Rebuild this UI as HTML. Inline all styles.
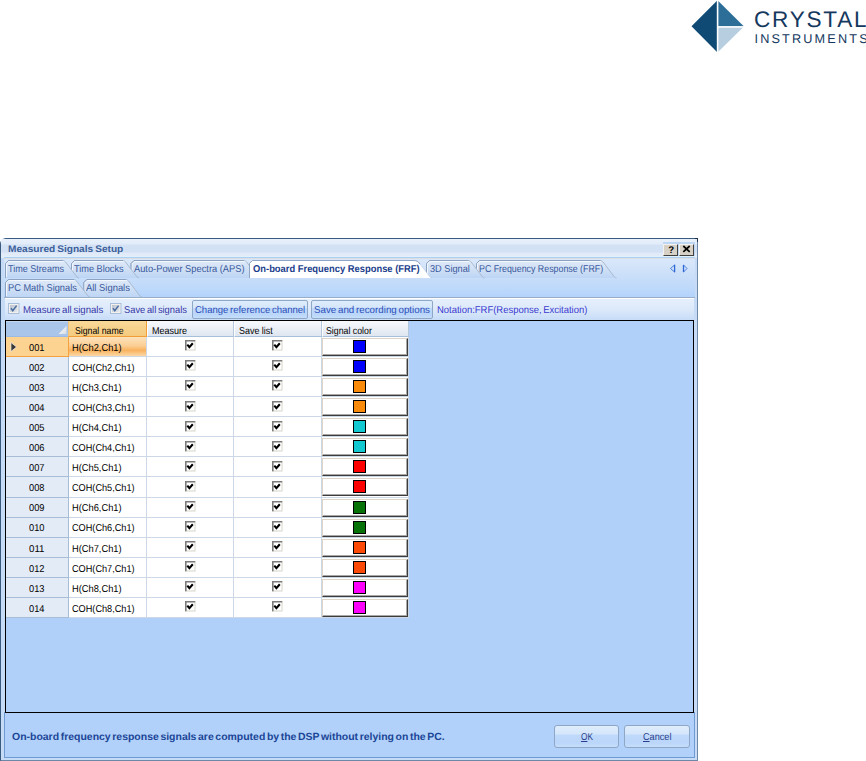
<!DOCTYPE html><html><head><meta charset="utf-8"><style>
html,body{margin:0;padding:0}
body{width:866px;height:761px;position:relative;overflow:hidden;background:#fff;font-family:"Liberation Sans",sans-serif;text-rendering:geometricPrecision}
.a{position:absolute}
.t{position:absolute;white-space:nowrap}
</style></head><body>
<svg class="a" style="left:685px;top:0px" width="181" height="56" viewBox="0 0 181 56">
<polygon points="6.5,26.3 32.5,0.3 32.5,52.5" fill="#0f4a74"/>
<polygon points="32.5,0.3 59,26.6 32.5,26.6" fill="#2c6e98"/>
<polygon points="32.5,26.6 59,26.6 32.5,52.5" fill="#b6cee0"/>
<rect x="31.8" y="0" width="1.6" height="53" fill="#fff"/>
<rect x="32.5" y="26.2" width="27" height="1.5" fill="#fff"/>
</svg>
<div class="t" style="left:754.00px;top:8.07px;font-size:22.6px;line-height:24px;font-weight:400;color:#14385e;word-spacing:0px;letter-spacing:1.75px;">CRYSTAL</div>
<div class="t" style="left:754.50px;top:31.60px;font-size:12.7px;line-height:14px;font-weight:400;color:#14385e;word-spacing:0px;letter-spacing:2.15px;">INSTRUMENTS</div>
<div class="a" style="left:0;top:238px;width:696px;height:521px;border:1px solid #6d87a9;border-top-color:#3a5a80;border-left-color:#3a5a80;background:#c6dcf6;border-top-left-radius:6px"></div>
<div class="a" style="left:695px;top:238px;width:3px;height:1px;background:#1c2c44"></div><div class="a" style="left:697px;top:238px;width:1px;height:4px;background:#24344c"></div><div class="a" style="left:696px;top:239px;width:1px;height:1px;background:#5a6a80"></div>
<div class="a" style="left:1px;top:239px;width:696px;height:19px;background:linear-gradient(#e8f0fb 0px,#e2ecf9 5px,#d3e1f5 6px,#d3e1f5 13px,#e0eaf8 14px,#e3edf9 18px)"></div>
<div class="t" style="left:7.80px;top:243.97px;font-size:9.6px;line-height:11px;font-weight:700;color:#3b5f99;word-spacing:-0.8px;transform:scale(1.0546,1.0);transform-origin:0 8.83px;">Measured Signals Setup</div>
<div class="a" style="left:663px;top:242px;width:32px;height:14px;background:#bcd6f3"></div>
<div class="a" style="left:663px;top:244px;width:13px;height:10px;background:#d6d0c6;border-right:1px solid #404040;border-bottom:1px solid #404040;border-top:1px solid #f4f2ee;border-left:1px solid #f4f2ee"></div>
<div class="a" style="left:679px;top:244px;width:13px;height:10px;background:#d6d0c6;border-right:1px solid #404040;border-bottom:1px solid #404040;border-top:1px solid #f4f2ee;border-left:1px solid #f4f2ee"></div>
<div class="t" style="left:668.20px;top:245.17px;font-size:9.6px;line-height:11px;font-weight:700;color:#000;word-spacing:0px;">?</div>
<svg class="a" style="left:682px;top:245px" width="9" height="8" viewBox="0 0 9 8"><path d="M1.3 1 L7.7 6.8 M7.7 1 L1.3 6.8" stroke="#000" stroke-width="1.7"/></svg>
<div class="a" style="left:4px;top:256px;width:691px;height:1px;background:#e2f0fb"></div>
<div class="a" style="left:4px;top:257px;width:691px;height:1px;background:#acd0f4"></div>
<div class="a" style="left:4px;top:258px;width:691px;height:40px;background:linear-gradient(#dbe8fa,#c8def9 50%,#b3d3fc)"></div>
<div class="a" style="left:4px;top:258px;width:691px;height:1px;background:#dcdee2"></div>
<div class="a" style="left:4px;top:297px;width:691px;height:1px;background:#97adc8"></div>
<svg class="a" style="left:0;top:0" width="866" height="320" viewBox="0 0 866 320"><defs><linearGradient id="tg" x1="0" y1="0" x2="0" y2="1"><stop offset="0" stop-color="#e0eaf8"/><stop offset="0.5" stop-color="#d0e0f5"/><stop offset="1" stop-color="#bdd5f5"/></linearGradient><linearGradient id="ta" x1="0" y1="0" x2="0" y2="1"><stop offset="0" stop-color="#ffffff"/><stop offset="1" stop-color="#ffffff"/></linearGradient></defs><path d="M476.5,278 L476.5,263.5 L479.5,260.5 L600.5,260.5 C601.5,260.5 602.0,261 603.0,262 L614.5,277 C615.0,277.5 615.5,278 616.5,278" fill="url(#tg)" stroke="#a9bbd1" stroke-width="1"/><path d="M477.5,277 L477.5,264 L480,261.5 L601.0,261.5" fill="none" stroke="#f2f7fd" stroke-width="1"/><path d="M476.5,278 L476.5,263.5 L479.5,260.5 L600.5,260.5" fill="none" stroke="#8ba2c0" stroke-width="1"/><path d="M426.5,278 L426.5,263.5 L429.5,260.5 L468.6,260.5 C469.6,260.5 470.1,261 471.1,262 L482.6,277 C483.1,277.5 483.6,278 484.6,278" fill="url(#tg)" stroke="#a9bbd1" stroke-width="1"/><path d="M427.5,277 L427.5,264 L430,261.5 L469.1,261.5" fill="none" stroke="#f2f7fd" stroke-width="1"/><path d="M426.5,278 L426.5,263.5 L429.5,260.5 L468.6,260.5" fill="none" stroke="#8ba2c0" stroke-width="1"/><path d="M131.0,278 L131.0,263.5 L134.0,260.5 L244,260.5 C245,260.5 245.5,261 246.5,262 L258,277 C258.5,277.5 259,278 260,278" fill="url(#tg)" stroke="#a9bbd1" stroke-width="1"/><path d="M132.0,277 L132.0,264 L134.5,261.5 L244.5,261.5" fill="none" stroke="#f2f7fd" stroke-width="1"/><path d="M131.0,278 L131.0,263.5 L134.0,260.5 L244,260.5" fill="none" stroke="#8ba2c0" stroke-width="1"/><path d="M71.5,278 L71.5,263.5 L74.5,260.5 L123,260.5 C124,260.5 124.5,261 125.5,262 L137,277 C137.5,277.5 138,278 139,278" fill="url(#tg)" stroke="#a9bbd1" stroke-width="1"/><path d="M72.5,277 L72.5,264 L75,261.5 L123.5,261.5" fill="none" stroke="#f2f7fd" stroke-width="1"/><path d="M71.5,278 L71.5,263.5 L74.5,260.5 L123,260.5" fill="none" stroke="#8ba2c0" stroke-width="1"/><path d="M5.5,278 L5.5,263.5 L8.5,260.5 L63,260.5 C64,260.5 64.5,261 65.5,262 L77,277 C77.5,277.5 78,278 79,278" fill="url(#tg)" stroke="#a9bbd1" stroke-width="1"/><path d="M6.5,277 L6.5,264 L9,261.5 L63.5,261.5" fill="none" stroke="#f2f7fd" stroke-width="1"/><path d="M5.5,278 L5.5,263.5 L8.5,260.5 L63,260.5" fill="none" stroke="#8ba2c0" stroke-width="1"/><path d="M83.8,297 L83.8,282.5 L86.8,279.5 L126,279.5 C127,279.5 127.5,280 128.5,281 L140,296 C140.5,296.5 141,297 142,297" fill="url(#tg)" stroke="#a9bbd1" stroke-width="1"/><path d="M84.8,296 L84.8,283 L87.3,280.5 L126.5,280.5" fill="none" stroke="#f2f7fd" stroke-width="1"/><path d="M83.8,297 L83.8,282.5 L86.8,279.5 L126,279.5" fill="none" stroke="#8ba2c0" stroke-width="1"/><path d="M5.5,297 L5.5,282.5 L8.5,279.5 L74,279.5 C75,279.5 75.5,280 76.5,281 L88,296 C88.5,296.5 89,297 90,297" fill="url(#tg)" stroke="#a9bbd1" stroke-width="1"/><path d="M6.5,296 L6.5,283 L9,280.5 L74.5,280.5" fill="none" stroke="#f2f7fd" stroke-width="1"/><path d="M5.5,297 L5.5,282.5 L8.5,279.5 L74,279.5" fill="none" stroke="#8ba2c0" stroke-width="1"/><path d="M249.5,278 L249.5,263.5 L252.5,260.5 L416,260.5 C417,260.5 417.5,261 418.5,262 L430,277 C430.5,277.5 431,278 432,278" fill="#ffffff" stroke="#b9cbe2" stroke-width="0.6"/><path d="M249.5,278 L249.5,263.5 L252.5,260.5 L413,260.5 C417,260.5 418,261.5 420,264" fill="none" stroke="#8ea5c3" stroke-width="1"/></svg>
<div class="t" style="left:7.80px;top:263.94px;font-size:10.0px;line-height:11px;font-weight:400;color:#38589c;word-spacing:0px;transform:scale(0.9053,1.0);transform-origin:0 8.96px;">Time Streams</div>
<div class="t" style="left:74.30px;top:263.94px;font-size:10.0px;line-height:11px;font-weight:400;color:#38589c;word-spacing:0px;transform:scale(0.9171,1.0);transform-origin:0 8.96px;">Time Blocks</div>
<div class="t" style="left:133.50px;top:263.94px;font-size:10.0px;line-height:11px;font-weight:400;color:#38589c;word-spacing:0px;transform:scale(0.9291,1.0);transform-origin:0 8.96px;">Auto-Power Spectra (APS)</div>
<div class="t" style="left:429.50px;top:263.94px;font-size:10.0px;line-height:11px;font-weight:400;color:#38589c;word-spacing:0px;transform:scale(0.9180,1.0);transform-origin:0 8.96px;">3D Signal</div>
<div class="t" style="left:479.00px;top:263.94px;font-size:10.0px;line-height:11px;font-weight:400;color:#38589c;word-spacing:0px;transform:scale(0.8826,1.0);transform-origin:0 8.96px;">PC Frequency Response (FRF)</div>
<div class="t" style="left:7.80px;top:282.74px;font-size:10.0px;line-height:11px;font-weight:400;color:#38589c;word-spacing:0px;transform:scale(0.9238,1.0);transform-origin:0 8.96px;">PC Math Signals</div>
<div class="t" style="left:85.60px;top:282.74px;font-size:10.0px;line-height:11px;font-weight:400;color:#38589c;word-spacing:0px;transform:scale(0.9403,1.0);transform-origin:0 8.96px;">All Signals</div>
<div class="t" style="left:252.70px;top:263.94px;font-size:10.0px;line-height:11px;font-weight:700;color:#1b3e8c;word-spacing:0px;transform:scale(0.9371,1.0);transform-origin:0 8.96px;">On-board Frequency Response (FRF)</div>
<svg class="a" style="left:662px;top:258px" width="32" height="20" viewBox="0 0 32 20"><path d="M12.5,7 L8.5,10.5 L12.5,14" fill="none" stroke="#3a70d8" stroke-width="0.9"/><path d="M12.6,6.8 L12.6,14.2" stroke="#2f68d8" stroke-width="1.3"/><path d="M21.5,7 L25,10.5 L21.5,14" fill="none" stroke="#3a70d8" stroke-width="0.9"/><path d="M21.5,6.8 L21.5,14.2" stroke="#2f68d8" stroke-width="1.3"/></svg>
<div class="a" style="left:4px;top:712px;width:689px;height:45px;border:1px solid #6f9bd2;border-top:none;background:#b1d1fa"></div>
<div class="a" style="left:5px;top:298px;width:689px;height:22px;background:linear-gradient(#e6f0fc,#dce9fa 50%,#c7dcf8);border-top:1px solid #ffffff;box-sizing:border-box"></div>
<div class="a" style="left:5px;top:320px;width:687px;height:391px;border:1px solid #000;background:#b0d0fa"></div>
<div class="a" style="left:6px;top:321px;width:62px;height:15px;background:#a9c5e9;border-top:1px solid #c3d7f0;box-sizing:border-box"></div>
<div class="a" style="left:6px;top:336px;width:63px;height:1px;background:#9dbbe2"></div>
<svg class="a" style="left:57px;top:325px" width="11" height="10" viewBox="0 0 11 10"><defs><linearGradient id="cg" x1="0" y1="0" x2="1" y2="1"><stop offset="0" stop-color="#ffffff"/><stop offset="1" stop-color="#d8dde4"/></linearGradient></defs><path d="M1.5,9 L9.5,1 L9.5,9 Z" fill="url(#cg)"/></svg>
<div class="a" style="left:68px;top:321px;width:79px;height:16px;background:linear-gradient(#f9d899,#f5cb7e);border-left:1px solid #f3c27a;border-right:1px solid #f29d38;border-bottom:1px solid #f29d38;box-sizing:border-box"></div>
<div class="a" style="left:147px;top:321px;width:87px;height:16px;background:linear-gradient(#f7f9fc,#e9eef5 60%,#dfe6f0);border-left:1px solid #ffffff;border-right:1px solid #b5c7dc;border-bottom:1px solid #a8bfd9;box-sizing:border-box"></div>
<div class="a" style="left:234px;top:321px;width:88px;height:16px;background:linear-gradient(#f7f9fc,#e9eef5 60%,#dfe6f0);border-left:1px solid #ffffff;border-right:1px solid #b5c7dc;border-bottom:1px solid #a8bfd9;box-sizing:border-box"></div>
<div class="a" style="left:322px;top:321px;width:87px;height:16px;background:linear-gradient(#f7f9fc,#e9eef5 60%,#dfe6f0);border-left:1px solid #ffffff;border-right:1px solid #b5c7dc;border-bottom:1px solid #a8bfd9;box-sizing:border-box"></div>
<div class="t" style="left:74.80px;top:326.24px;font-size:10.0px;line-height:11px;font-weight:400;color:#000;word-spacing:0px;transform:scale(0.8728,1.0);transform-origin:0 8.96px;">Signal name</div>
<div class="t" style="left:151.50px;top:326.24px;font-size:10.0px;line-height:11px;font-weight:400;color:#000;word-spacing:0px;transform:scale(0.9023,1.0);transform-origin:0 8.96px;">Measure</div>
<div class="t" style="left:238.80px;top:326.24px;font-size:10.0px;line-height:11px;font-weight:400;color:#000;word-spacing:0px;transform:scale(0.8944,1.0);transform-origin:0 8.96px;">Save list</div>
<div class="t" style="left:326.40px;top:326.24px;font-size:10.0px;line-height:11px;font-weight:400;color:#000;word-spacing:0px;transform:scale(0.8768,1.0);transform-origin:0 8.96px;">Signal color</div>
<div class="a" style="left:6px;top:337px;width:62px;height:19px;background:#fdd391"></div>
<div class="a" style="left:6px;top:356px;width:63px;height:1px;background:#f4a13e"></div>
<svg class="a" style="left:10px;top:342px" width="8" height="11" viewBox="0 0 8 11"><path d="M1,0.5 L6.5,5 L1,9.5 Z" fill="#3a3a3a" stroke="#ffffff" stroke-width="0.6"/></svg>
<div class="a" style="left:69px;top:337px;width:77px;height:19px;background:linear-gradient(#fde2bb,#fbcf95 45%,#f8b25e 70%,#fbd9a7)"></div>
<div class="a" style="left:68px;top:337px;width:1px;height:19px;background:#f4a13e"></div>
<div class="a" style="left:147px;top:337px;width:261px;height:19px;background:#fff"></div>
<div class="a" style="left:146px;top:337px;width:1px;height:19px;background:#cdd8e6"></div>
<div class="a" style="left:233px;top:337px;width:1px;height:19px;background:#cdd8e6"></div>
<div class="a" style="left:321px;top:337px;width:1px;height:19px;background:#cdd8e6"></div>
<div class="a" style="left:69px;top:356px;width:339px;height:1px;background:#cdd8e6"></div>
<div class="a" style="left:408px;top:337px;width:1px;height:20px;background:#cdd8e6"></div>
<div class="t" style="left:28.70px;top:342.84px;font-size:10.0px;line-height:11px;font-weight:400;color:#000;word-spacing:0px;transform:scale(0.9286,1.0);transform-origin:0 8.96px;">001</div>
<div class="t" style="left:71.70px;top:342.84px;font-size:10.0px;line-height:11px;font-weight:400;color:#000;word-spacing:0px;transform:scale(0.9298,1.0);transform-origin:0 8.96px;">H(Ch2,Ch1)</div>
<svg class="a" style="left:185px;top:340px" width="11" height="11" viewBox="0 0 11 11"><rect x="0.5" y="0.5" width="9.5" height="9.5" fill="#fff" stroke="#d8d4c8"/><path d="M0.8,10.2 L0.8,0.8 L10.2,0.8" fill="none" stroke="#7a7a7a" stroke-width="1.6"/><path d="M2.3,4.6 L4.4,7.2 L7.8,3.3" fill="none" stroke="#000" stroke-width="2.1"/></svg>
<svg class="a" style="left:272px;top:340px" width="11" height="11" viewBox="0 0 11 11"><rect x="0.5" y="0.5" width="9.5" height="9.5" fill="#fff" stroke="#d8d4c8"/><path d="M0.8,10.2 L0.8,0.8 L10.2,0.8" fill="none" stroke="#7a7a7a" stroke-width="1.6"/><path d="M2.3,4.6 L4.4,7.2 L7.8,3.3" fill="none" stroke="#000" stroke-width="2.1"/></svg>
<div class="a" style="left:322px;top:338px;width:86px;height:18px;background:#fff;border-top:1px solid #ddd5c6;border-left:1px solid #ddd5c6;border-right:1px solid #3c3c3c;border-bottom:1px solid #3c3c3c;box-shadow:inset -1px -1px 0 #a8a8a8;box-sizing:border-box"></div>
<div class="a" style="left:353px;top:339.5px;width:11px;height:11px;background:#0000ff;border:1px solid #000"></div>
<div class="a" style="left:6px;top:357px;width:62px;height:19px;background:#e3ebf6"></div>
<div class="a" style="left:6px;top:376px;width:63px;height:1px;background:#a7bdd6"></div>
<div class="a" style="left:69px;top:357px;width:77px;height:19px;background:#fff"></div>
<div class="a" style="left:68px;top:357px;width:1px;height:19px;background:#a7bdd6"></div>
<div class="a" style="left:147px;top:357px;width:261px;height:19px;background:#fff"></div>
<div class="a" style="left:146px;top:357px;width:1px;height:19px;background:#cdd8e6"></div>
<div class="a" style="left:233px;top:357px;width:1px;height:19px;background:#cdd8e6"></div>
<div class="a" style="left:321px;top:357px;width:1px;height:19px;background:#cdd8e6"></div>
<div class="a" style="left:69px;top:376px;width:339px;height:1px;background:#cdd8e6"></div>
<div class="a" style="left:408px;top:357px;width:1px;height:20px;background:#cdd8e6"></div>
<div class="t" style="left:28.70px;top:362.91px;font-size:10.0px;line-height:11px;font-weight:400;color:#000;word-spacing:0px;transform:scale(0.9286,1.0);transform-origin:0 8.96px;">002</div>
<div class="t" style="left:71.70px;top:362.91px;font-size:10.0px;line-height:11px;font-weight:400;color:#000;word-spacing:0px;transform:scale(0.9159,1.0);transform-origin:0 8.96px;">COH(Ch2,Ch1)</div>
<svg class="a" style="left:185px;top:360px" width="11" height="11" viewBox="0 0 11 11"><rect x="0.5" y="0.5" width="9.5" height="9.5" fill="#fff" stroke="#d8d4c8"/><path d="M0.8,10.2 L0.8,0.8 L10.2,0.8" fill="none" stroke="#7a7a7a" stroke-width="1.6"/><path d="M2.3,4.6 L4.4,7.2 L7.8,3.3" fill="none" stroke="#000" stroke-width="2.1"/></svg>
<svg class="a" style="left:272px;top:360px" width="11" height="11" viewBox="0 0 11 11"><rect x="0.5" y="0.5" width="9.5" height="9.5" fill="#fff" stroke="#d8d4c8"/><path d="M0.8,10.2 L0.8,0.8 L10.2,0.8" fill="none" stroke="#7a7a7a" stroke-width="1.6"/><path d="M2.3,4.6 L4.4,7.2 L7.8,3.3" fill="none" stroke="#000" stroke-width="2.1"/></svg>
<div class="a" style="left:322px;top:358px;width:86px;height:18px;background:#fff;border-top:1px solid #ddd5c6;border-left:1px solid #ddd5c6;border-right:1px solid #3c3c3c;border-bottom:1px solid #3c3c3c;box-shadow:inset -1px -1px 0 #a8a8a8;box-sizing:border-box"></div>
<div class="a" style="left:353px;top:359.5px;width:11px;height:11px;background:#0000ff;border:1px solid #000"></div>
<div class="a" style="left:6px;top:377px;width:62px;height:19px;background:#e3ebf6"></div>
<div class="a" style="left:6px;top:396px;width:63px;height:1px;background:#a7bdd6"></div>
<div class="a" style="left:69px;top:377px;width:77px;height:19px;background:#fff"></div>
<div class="a" style="left:68px;top:377px;width:1px;height:19px;background:#a7bdd6"></div>
<div class="a" style="left:147px;top:377px;width:261px;height:19px;background:#fff"></div>
<div class="a" style="left:146px;top:377px;width:1px;height:19px;background:#cdd8e6"></div>
<div class="a" style="left:233px;top:377px;width:1px;height:19px;background:#cdd8e6"></div>
<div class="a" style="left:321px;top:377px;width:1px;height:19px;background:#cdd8e6"></div>
<div class="a" style="left:69px;top:396px;width:339px;height:1px;background:#cdd8e6"></div>
<div class="a" style="left:408px;top:377px;width:1px;height:20px;background:#cdd8e6"></div>
<div class="t" style="left:28.70px;top:382.98px;font-size:10.0px;line-height:11px;font-weight:400;color:#000;word-spacing:0px;transform:scale(0.9286,1.0);transform-origin:0 8.96px;">003</div>
<div class="t" style="left:71.70px;top:382.98px;font-size:10.0px;line-height:11px;font-weight:400;color:#000;word-spacing:0px;transform:scale(0.9298,1.0);transform-origin:0 8.96px;">H(Ch3,Ch1)</div>
<svg class="a" style="left:185px;top:380px" width="11" height="11" viewBox="0 0 11 11"><rect x="0.5" y="0.5" width="9.5" height="9.5" fill="#fff" stroke="#d8d4c8"/><path d="M0.8,10.2 L0.8,0.8 L10.2,0.8" fill="none" stroke="#7a7a7a" stroke-width="1.6"/><path d="M2.3,4.6 L4.4,7.2 L7.8,3.3" fill="none" stroke="#000" stroke-width="2.1"/></svg>
<svg class="a" style="left:272px;top:380px" width="11" height="11" viewBox="0 0 11 11"><rect x="0.5" y="0.5" width="9.5" height="9.5" fill="#fff" stroke="#d8d4c8"/><path d="M0.8,10.2 L0.8,0.8 L10.2,0.8" fill="none" stroke="#7a7a7a" stroke-width="1.6"/><path d="M2.3,4.6 L4.4,7.2 L7.8,3.3" fill="none" stroke="#000" stroke-width="2.1"/></svg>
<div class="a" style="left:322px;top:378px;width:86px;height:18px;background:#fff;border-top:1px solid #ddd5c6;border-left:1px solid #ddd5c6;border-right:1px solid #3c3c3c;border-bottom:1px solid #3c3c3c;box-shadow:inset -1px -1px 0 #a8a8a8;box-sizing:border-box"></div>
<div class="a" style="left:353px;top:379.5px;width:11px;height:11px;background:#fa8a0a;border:1px solid #000"></div>
<div class="a" style="left:6px;top:397px;width:62px;height:19px;background:#e3ebf6"></div>
<div class="a" style="left:6px;top:416px;width:63px;height:1px;background:#a7bdd6"></div>
<div class="a" style="left:69px;top:397px;width:77px;height:19px;background:#fff"></div>
<div class="a" style="left:68px;top:397px;width:1px;height:19px;background:#a7bdd6"></div>
<div class="a" style="left:147px;top:397px;width:261px;height:19px;background:#fff"></div>
<div class="a" style="left:146px;top:397px;width:1px;height:19px;background:#cdd8e6"></div>
<div class="a" style="left:233px;top:397px;width:1px;height:19px;background:#cdd8e6"></div>
<div class="a" style="left:321px;top:397px;width:1px;height:19px;background:#cdd8e6"></div>
<div class="a" style="left:69px;top:416px;width:339px;height:1px;background:#cdd8e6"></div>
<div class="a" style="left:408px;top:397px;width:1px;height:20px;background:#cdd8e6"></div>
<div class="t" style="left:28.70px;top:403.05px;font-size:10.0px;line-height:11px;font-weight:400;color:#000;word-spacing:0px;transform:scale(0.9286,1.0);transform-origin:0 8.96px;">004</div>
<div class="t" style="left:71.70px;top:403.05px;font-size:10.0px;line-height:11px;font-weight:400;color:#000;word-spacing:0px;transform:scale(0.9159,1.0);transform-origin:0 8.96px;">COH(Ch3,Ch1)</div>
<svg class="a" style="left:185px;top:401px" width="11" height="11" viewBox="0 0 11 11"><rect x="0.5" y="0.5" width="9.5" height="9.5" fill="#fff" stroke="#d8d4c8"/><path d="M0.8,10.2 L0.8,0.8 L10.2,0.8" fill="none" stroke="#7a7a7a" stroke-width="1.6"/><path d="M2.3,4.6 L4.4,7.2 L7.8,3.3" fill="none" stroke="#000" stroke-width="2.1"/></svg>
<svg class="a" style="left:272px;top:401px" width="11" height="11" viewBox="0 0 11 11"><rect x="0.5" y="0.5" width="9.5" height="9.5" fill="#fff" stroke="#d8d4c8"/><path d="M0.8,10.2 L0.8,0.8 L10.2,0.8" fill="none" stroke="#7a7a7a" stroke-width="1.6"/><path d="M2.3,4.6 L4.4,7.2 L7.8,3.3" fill="none" stroke="#000" stroke-width="2.1"/></svg>
<div class="a" style="left:322px;top:398px;width:86px;height:18px;background:#fff;border-top:1px solid #ddd5c6;border-left:1px solid #ddd5c6;border-right:1px solid #3c3c3c;border-bottom:1px solid #3c3c3c;box-shadow:inset -1px -1px 0 #a8a8a8;box-sizing:border-box"></div>
<div class="a" style="left:353px;top:399.5px;width:11px;height:11px;background:#fa8a0a;border:1px solid #000"></div>
<div class="a" style="left:6px;top:417px;width:62px;height:19px;background:#e3ebf6"></div>
<div class="a" style="left:6px;top:436px;width:63px;height:1px;background:#a7bdd6"></div>
<div class="a" style="left:69px;top:417px;width:77px;height:19px;background:#fff"></div>
<div class="a" style="left:68px;top:417px;width:1px;height:19px;background:#a7bdd6"></div>
<div class="a" style="left:147px;top:417px;width:261px;height:19px;background:#fff"></div>
<div class="a" style="left:146px;top:417px;width:1px;height:19px;background:#cdd8e6"></div>
<div class="a" style="left:233px;top:417px;width:1px;height:19px;background:#cdd8e6"></div>
<div class="a" style="left:321px;top:417px;width:1px;height:19px;background:#cdd8e6"></div>
<div class="a" style="left:69px;top:436px;width:339px;height:1px;background:#cdd8e6"></div>
<div class="a" style="left:408px;top:417px;width:1px;height:20px;background:#cdd8e6"></div>
<div class="t" style="left:28.70px;top:423.12px;font-size:10.0px;line-height:11px;font-weight:400;color:#000;word-spacing:0px;transform:scale(0.9286,1.0);transform-origin:0 8.96px;">005</div>
<div class="t" style="left:71.70px;top:423.12px;font-size:10.0px;line-height:11px;font-weight:400;color:#000;word-spacing:0px;transform:scale(0.9298,1.0);transform-origin:0 8.96px;">H(Ch4,Ch1)</div>
<svg class="a" style="left:185px;top:421px" width="11" height="11" viewBox="0 0 11 11"><rect x="0.5" y="0.5" width="9.5" height="9.5" fill="#fff" stroke="#d8d4c8"/><path d="M0.8,10.2 L0.8,0.8 L10.2,0.8" fill="none" stroke="#7a7a7a" stroke-width="1.6"/><path d="M2.3,4.6 L4.4,7.2 L7.8,3.3" fill="none" stroke="#000" stroke-width="2.1"/></svg>
<svg class="a" style="left:272px;top:421px" width="11" height="11" viewBox="0 0 11 11"><rect x="0.5" y="0.5" width="9.5" height="9.5" fill="#fff" stroke="#d8d4c8"/><path d="M0.8,10.2 L0.8,0.8 L10.2,0.8" fill="none" stroke="#7a7a7a" stroke-width="1.6"/><path d="M2.3,4.6 L4.4,7.2 L7.8,3.3" fill="none" stroke="#000" stroke-width="2.1"/></svg>
<div class="a" style="left:322px;top:418px;width:86px;height:18px;background:#fff;border-top:1px solid #ddd5c6;border-left:1px solid #ddd5c6;border-right:1px solid #3c3c3c;border-bottom:1px solid #3c3c3c;box-shadow:inset -1px -1px 0 #a8a8a8;box-sizing:border-box"></div>
<div class="a" style="left:353px;top:419.5px;width:11px;height:11px;background:#12c9d2;border:1px solid #000"></div>
<div class="a" style="left:6px;top:437px;width:62px;height:19px;background:#e3ebf6"></div>
<div class="a" style="left:6px;top:456px;width:63px;height:1px;background:#a7bdd6"></div>
<div class="a" style="left:69px;top:437px;width:77px;height:19px;background:#fff"></div>
<div class="a" style="left:68px;top:437px;width:1px;height:19px;background:#a7bdd6"></div>
<div class="a" style="left:147px;top:437px;width:261px;height:19px;background:#fff"></div>
<div class="a" style="left:146px;top:437px;width:1px;height:19px;background:#cdd8e6"></div>
<div class="a" style="left:233px;top:437px;width:1px;height:19px;background:#cdd8e6"></div>
<div class="a" style="left:321px;top:437px;width:1px;height:19px;background:#cdd8e6"></div>
<div class="a" style="left:69px;top:456px;width:339px;height:1px;background:#cdd8e6"></div>
<div class="a" style="left:408px;top:437px;width:1px;height:20px;background:#cdd8e6"></div>
<div class="t" style="left:28.70px;top:443.19px;font-size:10.0px;line-height:11px;font-weight:400;color:#000;word-spacing:0px;transform:scale(0.9286,1.0);transform-origin:0 8.96px;">006</div>
<div class="t" style="left:71.70px;top:443.19px;font-size:10.0px;line-height:11px;font-weight:400;color:#000;word-spacing:0px;transform:scale(0.9159,1.0);transform-origin:0 8.96px;">COH(Ch4,Ch1)</div>
<svg class="a" style="left:185px;top:441px" width="11" height="11" viewBox="0 0 11 11"><rect x="0.5" y="0.5" width="9.5" height="9.5" fill="#fff" stroke="#d8d4c8"/><path d="M0.8,10.2 L0.8,0.8 L10.2,0.8" fill="none" stroke="#7a7a7a" stroke-width="1.6"/><path d="M2.3,4.6 L4.4,7.2 L7.8,3.3" fill="none" stroke="#000" stroke-width="2.1"/></svg>
<svg class="a" style="left:272px;top:441px" width="11" height="11" viewBox="0 0 11 11"><rect x="0.5" y="0.5" width="9.5" height="9.5" fill="#fff" stroke="#d8d4c8"/><path d="M0.8,10.2 L0.8,0.8 L10.2,0.8" fill="none" stroke="#7a7a7a" stroke-width="1.6"/><path d="M2.3,4.6 L4.4,7.2 L7.8,3.3" fill="none" stroke="#000" stroke-width="2.1"/></svg>
<div class="a" style="left:322px;top:438px;width:86px;height:18px;background:#fff;border-top:1px solid #ddd5c6;border-left:1px solid #ddd5c6;border-right:1px solid #3c3c3c;border-bottom:1px solid #3c3c3c;box-shadow:inset -1px -1px 0 #a8a8a8;box-sizing:border-box"></div>
<div class="a" style="left:353px;top:439.5px;width:11px;height:11px;background:#12c9d2;border:1px solid #000"></div>
<div class="a" style="left:6px;top:457px;width:62px;height:19px;background:#e3ebf6"></div>
<div class="a" style="left:6px;top:476px;width:63px;height:1px;background:#a7bdd6"></div>
<div class="a" style="left:69px;top:457px;width:77px;height:19px;background:#fff"></div>
<div class="a" style="left:68px;top:457px;width:1px;height:19px;background:#a7bdd6"></div>
<div class="a" style="left:147px;top:457px;width:261px;height:19px;background:#fff"></div>
<div class="a" style="left:146px;top:457px;width:1px;height:19px;background:#cdd8e6"></div>
<div class="a" style="left:233px;top:457px;width:1px;height:19px;background:#cdd8e6"></div>
<div class="a" style="left:321px;top:457px;width:1px;height:19px;background:#cdd8e6"></div>
<div class="a" style="left:69px;top:476px;width:339px;height:1px;background:#cdd8e6"></div>
<div class="a" style="left:408px;top:457px;width:1px;height:20px;background:#cdd8e6"></div>
<div class="t" style="left:28.70px;top:463.26px;font-size:10.0px;line-height:11px;font-weight:400;color:#000;word-spacing:0px;transform:scale(0.9286,1.0);transform-origin:0 8.96px;">007</div>
<div class="t" style="left:71.70px;top:463.26px;font-size:10.0px;line-height:11px;font-weight:400;color:#000;word-spacing:0px;transform:scale(0.9298,1.0);transform-origin:0 8.96px;">H(Ch5,Ch1)</div>
<svg class="a" style="left:185px;top:461px" width="11" height="11" viewBox="0 0 11 11"><rect x="0.5" y="0.5" width="9.5" height="9.5" fill="#fff" stroke="#d8d4c8"/><path d="M0.8,10.2 L0.8,0.8 L10.2,0.8" fill="none" stroke="#7a7a7a" stroke-width="1.6"/><path d="M2.3,4.6 L4.4,7.2 L7.8,3.3" fill="none" stroke="#000" stroke-width="2.1"/></svg>
<svg class="a" style="left:272px;top:461px" width="11" height="11" viewBox="0 0 11 11"><rect x="0.5" y="0.5" width="9.5" height="9.5" fill="#fff" stroke="#d8d4c8"/><path d="M0.8,10.2 L0.8,0.8 L10.2,0.8" fill="none" stroke="#7a7a7a" stroke-width="1.6"/><path d="M2.3,4.6 L4.4,7.2 L7.8,3.3" fill="none" stroke="#000" stroke-width="2.1"/></svg>
<div class="a" style="left:322px;top:458px;width:86px;height:18px;background:#fff;border-top:1px solid #ddd5c6;border-left:1px solid #ddd5c6;border-right:1px solid #3c3c3c;border-bottom:1px solid #3c3c3c;box-shadow:inset -1px -1px 0 #a8a8a8;box-sizing:border-box"></div>
<div class="a" style="left:353px;top:459.5px;width:11px;height:11px;background:#ff0000;border:1px solid #000"></div>
<div class="a" style="left:6px;top:477px;width:62px;height:20px;background:#e3ebf6"></div>
<div class="a" style="left:6px;top:497px;width:63px;height:1px;background:#a7bdd6"></div>
<div class="a" style="left:69px;top:477px;width:77px;height:20px;background:#fff"></div>
<div class="a" style="left:68px;top:477px;width:1px;height:20px;background:#a7bdd6"></div>
<div class="a" style="left:147px;top:477px;width:261px;height:20px;background:#fff"></div>
<div class="a" style="left:146px;top:477px;width:1px;height:20px;background:#cdd8e6"></div>
<div class="a" style="left:233px;top:477px;width:1px;height:20px;background:#cdd8e6"></div>
<div class="a" style="left:321px;top:477px;width:1px;height:20px;background:#cdd8e6"></div>
<div class="a" style="left:69px;top:497px;width:339px;height:1px;background:#cdd8e6"></div>
<div class="a" style="left:408px;top:477px;width:1px;height:21px;background:#cdd8e6"></div>
<div class="t" style="left:28.70px;top:483.33px;font-size:10.0px;line-height:11px;font-weight:400;color:#000;word-spacing:0px;transform:scale(0.9286,1.0);transform-origin:0 8.96px;">008</div>
<div class="t" style="left:71.70px;top:483.33px;font-size:10.0px;line-height:11px;font-weight:400;color:#000;word-spacing:0px;transform:scale(0.9159,1.0);transform-origin:0 8.96px;">COH(Ch5,Ch1)</div>
<svg class="a" style="left:185px;top:481px" width="11" height="11" viewBox="0 0 11 11"><rect x="0.5" y="0.5" width="9.5" height="9.5" fill="#fff" stroke="#d8d4c8"/><path d="M0.8,10.2 L0.8,0.8 L10.2,0.8" fill="none" stroke="#7a7a7a" stroke-width="1.6"/><path d="M2.3,4.6 L4.4,7.2 L7.8,3.3" fill="none" stroke="#000" stroke-width="2.1"/></svg>
<svg class="a" style="left:272px;top:481px" width="11" height="11" viewBox="0 0 11 11"><rect x="0.5" y="0.5" width="9.5" height="9.5" fill="#fff" stroke="#d8d4c8"/><path d="M0.8,10.2 L0.8,0.8 L10.2,0.8" fill="none" stroke="#7a7a7a" stroke-width="1.6"/><path d="M2.3,4.6 L4.4,7.2 L7.8,3.3" fill="none" stroke="#000" stroke-width="2.1"/></svg>
<div class="a" style="left:322px;top:478px;width:86px;height:18px;background:#fff;border-top:1px solid #ddd5c6;border-left:1px solid #ddd5c6;border-right:1px solid #3c3c3c;border-bottom:1px solid #3c3c3c;box-shadow:inset -1px -1px 0 #a8a8a8;box-sizing:border-box"></div>
<div class="a" style="left:353px;top:479.5px;width:11px;height:11px;background:#ff0000;border:1px solid #000"></div>
<div class="a" style="left:6px;top:498px;width:62px;height:19px;background:#e3ebf6"></div>
<div class="a" style="left:6px;top:517px;width:63px;height:1px;background:#a7bdd6"></div>
<div class="a" style="left:69px;top:498px;width:77px;height:19px;background:#fff"></div>
<div class="a" style="left:68px;top:498px;width:1px;height:19px;background:#a7bdd6"></div>
<div class="a" style="left:147px;top:498px;width:261px;height:19px;background:#fff"></div>
<div class="a" style="left:146px;top:498px;width:1px;height:19px;background:#cdd8e6"></div>
<div class="a" style="left:233px;top:498px;width:1px;height:19px;background:#cdd8e6"></div>
<div class="a" style="left:321px;top:498px;width:1px;height:19px;background:#cdd8e6"></div>
<div class="a" style="left:69px;top:517px;width:339px;height:1px;background:#cdd8e6"></div>
<div class="a" style="left:408px;top:498px;width:1px;height:20px;background:#cdd8e6"></div>
<div class="t" style="left:28.70px;top:503.40px;font-size:10.0px;line-height:11px;font-weight:400;color:#000;word-spacing:0px;transform:scale(0.9286,1.0);transform-origin:0 8.96px;">009</div>
<div class="t" style="left:71.70px;top:503.40px;font-size:10.0px;line-height:11px;font-weight:400;color:#000;word-spacing:0px;transform:scale(0.9298,1.0);transform-origin:0 8.96px;">H(Ch6,Ch1)</div>
<svg class="a" style="left:185px;top:501px" width="11" height="11" viewBox="0 0 11 11"><rect x="0.5" y="0.5" width="9.5" height="9.5" fill="#fff" stroke="#d8d4c8"/><path d="M0.8,10.2 L0.8,0.8 L10.2,0.8" fill="none" stroke="#7a7a7a" stroke-width="1.6"/><path d="M2.3,4.6 L4.4,7.2 L7.8,3.3" fill="none" stroke="#000" stroke-width="2.1"/></svg>
<svg class="a" style="left:272px;top:501px" width="11" height="11" viewBox="0 0 11 11"><rect x="0.5" y="0.5" width="9.5" height="9.5" fill="#fff" stroke="#d8d4c8"/><path d="M0.8,10.2 L0.8,0.8 L10.2,0.8" fill="none" stroke="#7a7a7a" stroke-width="1.6"/><path d="M2.3,4.6 L4.4,7.2 L7.8,3.3" fill="none" stroke="#000" stroke-width="2.1"/></svg>
<div class="a" style="left:322px;top:499px;width:86px;height:18px;background:#fff;border-top:1px solid #ddd5c6;border-left:1px solid #ddd5c6;border-right:1px solid #3c3c3c;border-bottom:1px solid #3c3c3c;box-shadow:inset -1px -1px 0 #a8a8a8;box-sizing:border-box"></div>
<div class="a" style="left:353px;top:500.5px;width:11px;height:11px;background:#077207;border:1px solid #000"></div>
<div class="a" style="left:6px;top:518px;width:62px;height:19px;background:#e3ebf6"></div>
<div class="a" style="left:6px;top:537px;width:63px;height:1px;background:#a7bdd6"></div>
<div class="a" style="left:69px;top:518px;width:77px;height:19px;background:#fff"></div>
<div class="a" style="left:68px;top:518px;width:1px;height:19px;background:#a7bdd6"></div>
<div class="a" style="left:147px;top:518px;width:261px;height:19px;background:#fff"></div>
<div class="a" style="left:146px;top:518px;width:1px;height:19px;background:#cdd8e6"></div>
<div class="a" style="left:233px;top:518px;width:1px;height:19px;background:#cdd8e6"></div>
<div class="a" style="left:321px;top:518px;width:1px;height:19px;background:#cdd8e6"></div>
<div class="a" style="left:69px;top:537px;width:339px;height:1px;background:#cdd8e6"></div>
<div class="a" style="left:408px;top:518px;width:1px;height:20px;background:#cdd8e6"></div>
<div class="t" style="left:28.70px;top:523.46px;font-size:10.0px;line-height:11px;font-weight:400;color:#000;word-spacing:0px;transform:scale(0.9286,1.0);transform-origin:0 8.96px;">010</div>
<div class="t" style="left:71.70px;top:523.46px;font-size:10.0px;line-height:11px;font-weight:400;color:#000;word-spacing:0px;transform:scale(0.9159,1.0);transform-origin:0 8.96px;">COH(Ch6,Ch1)</div>
<svg class="a" style="left:185px;top:521px" width="11" height="11" viewBox="0 0 11 11"><rect x="0.5" y="0.5" width="9.5" height="9.5" fill="#fff" stroke="#d8d4c8"/><path d="M0.8,10.2 L0.8,0.8 L10.2,0.8" fill="none" stroke="#7a7a7a" stroke-width="1.6"/><path d="M2.3,4.6 L4.4,7.2 L7.8,3.3" fill="none" stroke="#000" stroke-width="2.1"/></svg>
<svg class="a" style="left:272px;top:521px" width="11" height="11" viewBox="0 0 11 11"><rect x="0.5" y="0.5" width="9.5" height="9.5" fill="#fff" stroke="#d8d4c8"/><path d="M0.8,10.2 L0.8,0.8 L10.2,0.8" fill="none" stroke="#7a7a7a" stroke-width="1.6"/><path d="M2.3,4.6 L4.4,7.2 L7.8,3.3" fill="none" stroke="#000" stroke-width="2.1"/></svg>
<div class="a" style="left:322px;top:519px;width:86px;height:18px;background:#fff;border-top:1px solid #ddd5c6;border-left:1px solid #ddd5c6;border-right:1px solid #3c3c3c;border-bottom:1px solid #3c3c3c;box-shadow:inset -1px -1px 0 #a8a8a8;box-sizing:border-box"></div>
<div class="a" style="left:353px;top:520.5px;width:11px;height:11px;background:#077207;border:1px solid #000"></div>
<div class="a" style="left:6px;top:538px;width:62px;height:19px;background:#e3ebf6"></div>
<div class="a" style="left:6px;top:557px;width:63px;height:1px;background:#a7bdd6"></div>
<div class="a" style="left:69px;top:538px;width:77px;height:19px;background:#fff"></div>
<div class="a" style="left:68px;top:538px;width:1px;height:19px;background:#a7bdd6"></div>
<div class="a" style="left:147px;top:538px;width:261px;height:19px;background:#fff"></div>
<div class="a" style="left:146px;top:538px;width:1px;height:19px;background:#cdd8e6"></div>
<div class="a" style="left:233px;top:538px;width:1px;height:19px;background:#cdd8e6"></div>
<div class="a" style="left:321px;top:538px;width:1px;height:19px;background:#cdd8e6"></div>
<div class="a" style="left:69px;top:557px;width:339px;height:1px;background:#cdd8e6"></div>
<div class="a" style="left:408px;top:538px;width:1px;height:20px;background:#cdd8e6"></div>
<div class="t" style="left:28.70px;top:543.53px;font-size:10.0px;line-height:11px;font-weight:400;color:#000;word-spacing:0px;transform:scale(0.9706,1.0);transform-origin:0 8.96px;">011</div>
<div class="t" style="left:71.70px;top:543.53px;font-size:10.0px;line-height:11px;font-weight:400;color:#000;word-spacing:0px;transform:scale(0.9298,1.0);transform-origin:0 8.96px;">H(Ch7,Ch1)</div>
<svg class="a" style="left:185px;top:541px" width="11" height="11" viewBox="0 0 11 11"><rect x="0.5" y="0.5" width="9.5" height="9.5" fill="#fff" stroke="#d8d4c8"/><path d="M0.8,10.2 L0.8,0.8 L10.2,0.8" fill="none" stroke="#7a7a7a" stroke-width="1.6"/><path d="M2.3,4.6 L4.4,7.2 L7.8,3.3" fill="none" stroke="#000" stroke-width="2.1"/></svg>
<svg class="a" style="left:272px;top:541px" width="11" height="11" viewBox="0 0 11 11"><rect x="0.5" y="0.5" width="9.5" height="9.5" fill="#fff" stroke="#d8d4c8"/><path d="M0.8,10.2 L0.8,0.8 L10.2,0.8" fill="none" stroke="#7a7a7a" stroke-width="1.6"/><path d="M2.3,4.6 L4.4,7.2 L7.8,3.3" fill="none" stroke="#000" stroke-width="2.1"/></svg>
<div class="a" style="left:322px;top:539px;width:86px;height:18px;background:#fff;border-top:1px solid #ddd5c6;border-left:1px solid #ddd5c6;border-right:1px solid #3c3c3c;border-bottom:1px solid #3c3c3c;box-shadow:inset -1px -1px 0 #a8a8a8;box-sizing:border-box"></div>
<div class="a" style="left:353px;top:540.5px;width:11px;height:11px;background:#fc4a06;border:1px solid #000"></div>
<div class="a" style="left:6px;top:558px;width:62px;height:19px;background:#e3ebf6"></div>
<div class="a" style="left:6px;top:577px;width:63px;height:1px;background:#a7bdd6"></div>
<div class="a" style="left:69px;top:558px;width:77px;height:19px;background:#fff"></div>
<div class="a" style="left:68px;top:558px;width:1px;height:19px;background:#a7bdd6"></div>
<div class="a" style="left:147px;top:558px;width:261px;height:19px;background:#fff"></div>
<div class="a" style="left:146px;top:558px;width:1px;height:19px;background:#cdd8e6"></div>
<div class="a" style="left:233px;top:558px;width:1px;height:19px;background:#cdd8e6"></div>
<div class="a" style="left:321px;top:558px;width:1px;height:19px;background:#cdd8e6"></div>
<div class="a" style="left:69px;top:577px;width:339px;height:1px;background:#cdd8e6"></div>
<div class="a" style="left:408px;top:558px;width:1px;height:20px;background:#cdd8e6"></div>
<div class="t" style="left:28.70px;top:563.60px;font-size:10.0px;line-height:11px;font-weight:400;color:#000;word-spacing:0px;transform:scale(0.9286,1.0);transform-origin:0 8.96px;">012</div>
<div class="t" style="left:71.70px;top:563.60px;font-size:10.0px;line-height:11px;font-weight:400;color:#000;word-spacing:0px;transform:scale(0.9159,1.0);transform-origin:0 8.96px;">COH(Ch7,Ch1)</div>
<svg class="a" style="left:185px;top:561px" width="11" height="11" viewBox="0 0 11 11"><rect x="0.5" y="0.5" width="9.5" height="9.5" fill="#fff" stroke="#d8d4c8"/><path d="M0.8,10.2 L0.8,0.8 L10.2,0.8" fill="none" stroke="#7a7a7a" stroke-width="1.6"/><path d="M2.3,4.6 L4.4,7.2 L7.8,3.3" fill="none" stroke="#000" stroke-width="2.1"/></svg>
<svg class="a" style="left:272px;top:561px" width="11" height="11" viewBox="0 0 11 11"><rect x="0.5" y="0.5" width="9.5" height="9.5" fill="#fff" stroke="#d8d4c8"/><path d="M0.8,10.2 L0.8,0.8 L10.2,0.8" fill="none" stroke="#7a7a7a" stroke-width="1.6"/><path d="M2.3,4.6 L4.4,7.2 L7.8,3.3" fill="none" stroke="#000" stroke-width="2.1"/></svg>
<div class="a" style="left:322px;top:559px;width:86px;height:18px;background:#fff;border-top:1px solid #ddd5c6;border-left:1px solid #ddd5c6;border-right:1px solid #3c3c3c;border-bottom:1px solid #3c3c3c;box-shadow:inset -1px -1px 0 #a8a8a8;box-sizing:border-box"></div>
<div class="a" style="left:353px;top:560.5px;width:11px;height:11px;background:#fc4a06;border:1px solid #000"></div>
<div class="a" style="left:6px;top:578px;width:62px;height:19px;background:#e3ebf6"></div>
<div class="a" style="left:6px;top:597px;width:63px;height:1px;background:#a7bdd6"></div>
<div class="a" style="left:69px;top:578px;width:77px;height:19px;background:#fff"></div>
<div class="a" style="left:68px;top:578px;width:1px;height:19px;background:#a7bdd6"></div>
<div class="a" style="left:147px;top:578px;width:261px;height:19px;background:#fff"></div>
<div class="a" style="left:146px;top:578px;width:1px;height:19px;background:#cdd8e6"></div>
<div class="a" style="left:233px;top:578px;width:1px;height:19px;background:#cdd8e6"></div>
<div class="a" style="left:321px;top:578px;width:1px;height:19px;background:#cdd8e6"></div>
<div class="a" style="left:69px;top:597px;width:339px;height:1px;background:#cdd8e6"></div>
<div class="a" style="left:408px;top:578px;width:1px;height:20px;background:#cdd8e6"></div>
<div class="t" style="left:28.70px;top:583.67px;font-size:10.0px;line-height:11px;font-weight:400;color:#000;word-spacing:0px;transform:scale(0.9286,1.0);transform-origin:0 8.96px;">013</div>
<div class="t" style="left:71.70px;top:583.67px;font-size:10.0px;line-height:11px;font-weight:400;color:#000;word-spacing:0px;transform:scale(0.9298,1.0);transform-origin:0 8.96px;">H(Ch8,Ch1)</div>
<svg class="a" style="left:185px;top:581px" width="11" height="11" viewBox="0 0 11 11"><rect x="0.5" y="0.5" width="9.5" height="9.5" fill="#fff" stroke="#d8d4c8"/><path d="M0.8,10.2 L0.8,0.8 L10.2,0.8" fill="none" stroke="#7a7a7a" stroke-width="1.6"/><path d="M2.3,4.6 L4.4,7.2 L7.8,3.3" fill="none" stroke="#000" stroke-width="2.1"/></svg>
<svg class="a" style="left:272px;top:581px" width="11" height="11" viewBox="0 0 11 11"><rect x="0.5" y="0.5" width="9.5" height="9.5" fill="#fff" stroke="#d8d4c8"/><path d="M0.8,10.2 L0.8,0.8 L10.2,0.8" fill="none" stroke="#7a7a7a" stroke-width="1.6"/><path d="M2.3,4.6 L4.4,7.2 L7.8,3.3" fill="none" stroke="#000" stroke-width="2.1"/></svg>
<div class="a" style="left:322px;top:579px;width:86px;height:18px;background:#fff;border-top:1px solid #ddd5c6;border-left:1px solid #ddd5c6;border-right:1px solid #3c3c3c;border-bottom:1px solid #3c3c3c;box-shadow:inset -1px -1px 0 #a8a8a8;box-sizing:border-box"></div>
<div class="a" style="left:353px;top:580.5px;width:11px;height:11px;background:#ff00ff;border:1px solid #000"></div>
<div class="a" style="left:6px;top:598px;width:62px;height:19px;background:#e3ebf6"></div>
<div class="a" style="left:6px;top:617px;width:63px;height:1px;background:#a7bdd6"></div>
<div class="a" style="left:69px;top:598px;width:77px;height:19px;background:#fff"></div>
<div class="a" style="left:68px;top:598px;width:1px;height:19px;background:#a7bdd6"></div>
<div class="a" style="left:147px;top:598px;width:261px;height:19px;background:#fff"></div>
<div class="a" style="left:146px;top:598px;width:1px;height:19px;background:#cdd8e6"></div>
<div class="a" style="left:233px;top:598px;width:1px;height:19px;background:#cdd8e6"></div>
<div class="a" style="left:321px;top:598px;width:1px;height:19px;background:#cdd8e6"></div>
<div class="a" style="left:69px;top:617px;width:339px;height:1px;background:#cdd8e6"></div>
<div class="a" style="left:408px;top:598px;width:1px;height:20px;background:#cdd8e6"></div>
<div class="t" style="left:28.70px;top:603.75px;font-size:10.0px;line-height:11px;font-weight:400;color:#000;word-spacing:0px;transform:scale(0.9286,1.0);transform-origin:0 8.96px;">014</div>
<div class="t" style="left:71.70px;top:603.75px;font-size:10.0px;line-height:11px;font-weight:400;color:#000;word-spacing:0px;transform:scale(0.9159,1.0);transform-origin:0 8.96px;">COH(Ch8,Ch1)</div>
<svg class="a" style="left:185px;top:601px" width="11" height="11" viewBox="0 0 11 11"><rect x="0.5" y="0.5" width="9.5" height="9.5" fill="#fff" stroke="#d8d4c8"/><path d="M0.8,10.2 L0.8,0.8 L10.2,0.8" fill="none" stroke="#7a7a7a" stroke-width="1.6"/><path d="M2.3,4.6 L4.4,7.2 L7.8,3.3" fill="none" stroke="#000" stroke-width="2.1"/></svg>
<svg class="a" style="left:272px;top:601px" width="11" height="11" viewBox="0 0 11 11"><rect x="0.5" y="0.5" width="9.5" height="9.5" fill="#fff" stroke="#d8d4c8"/><path d="M0.8,10.2 L0.8,0.8 L10.2,0.8" fill="none" stroke="#7a7a7a" stroke-width="1.6"/><path d="M2.3,4.6 L4.4,7.2 L7.8,3.3" fill="none" stroke="#000" stroke-width="2.1"/></svg>
<div class="a" style="left:322px;top:599px;width:86px;height:18px;background:#fff;border-top:1px solid #ddd5c6;border-left:1px solid #ddd5c6;border-right:1px solid #3c3c3c;border-bottom:1px solid #3c3c3c;box-shadow:inset -1px -1px 0 #a8a8a8;box-sizing:border-box"></div>
<div class="a" style="left:353px;top:600.5px;width:11px;height:11px;background:#ff00ff;border:1px solid #000"></div>
<svg class="a" style="left:8px;top:303px" width="12" height="11" viewBox="0 0 12 11"><defs><linearGradient id="cbg" x1="0" y1="0" x2="1" y2="1"><stop offset="0" stop-color="#b9c2cf"/><stop offset="1" stop-color="#e6e9ee"/></linearGradient></defs><rect x="0.5" y="0.5" width="10.5" height="10" fill="#f3f1ec" stroke="#a9bedb"/><rect x="2" y="2" width="7.5" height="7" fill="url(#cbg)"/><path d="M3,5.2 L4.8,7.8 L8.6,2.6" fill="none" stroke="#4a6c9f" stroke-width="1.5"/></svg>
<div class="t" style="left:22.90px;top:304.74px;font-size:10.0px;line-height:11px;font-weight:400;color:#3434a6;word-spacing:-1px;transform:scale(0.9606,1.0);transform-origin:0 8.96px;">Measure all signals</div>
<svg class="a" style="left:109.5px;top:303px" width="12" height="11" viewBox="0 0 12 11"><defs><linearGradient id="cbg" x1="0" y1="0" x2="1" y2="1"><stop offset="0" stop-color="#b9c2cf"/><stop offset="1" stop-color="#e6e9ee"/></linearGradient></defs><rect x="0.5" y="0.5" width="10.5" height="10" fill="#f3f1ec" stroke="#a9bedb"/><rect x="2" y="2" width="7.5" height="7" fill="url(#cbg)"/><path d="M3,5.2 L4.8,7.8 L8.6,2.6" fill="none" stroke="#4a6c9f" stroke-width="1.5"/></svg>
<div class="t" style="left:123.50px;top:304.74px;font-size:10.0px;line-height:11px;font-weight:400;color:#3434a6;word-spacing:-1px;transform:scale(0.9321,1.0);transform-origin:0 8.96px;">Save all signals</div>
<div class="a" style="left:192px;top:300px;width:114px;height:17px;border:1px solid #8fa7c7;border-radius:2px;background:linear-gradient(#dfedfc,#d4e6fb 40%,#bfd9fa 41%,#bad6fa 80%,#c6defa)"></div>
<div class="t" style="left:194.50px;top:304.54px;font-size:10.0px;line-height:11px;font-weight:400;color:#2c4fb8;word-spacing:-1px;transform:scale(0.9512,1.0);transform-origin:0 8.96px;">Change reference channel</div>
<div class="a" style="left:311px;top:300px;width:120px;height:17px;border:1px solid #8fa7c7;border-radius:2px;background:linear-gradient(#dfedfc,#d4e6fb 40%,#bfd9fa 41%,#bad6fa 80%,#c6defa)"></div>
<div class="t" style="left:314.00px;top:304.54px;font-size:10.0px;line-height:11px;font-weight:400;color:#2c4fb8;word-spacing:-1px;transform:scale(0.9769,1.0);transform-origin:0 8.96px;">Save and recording options</div>
<div class="t" style="left:437.00px;top:304.74px;font-size:10.0px;line-height:11px;font-weight:400;color:#3a3ad0;word-spacing:-1px;transform:scale(0.9450,1.0);transform-origin:0 8.96px;">Notation:FRF(Response, Excitation)</div>
<div class="t" style="left:12.00px;top:731.90px;font-size:10.4px;line-height:11px;font-weight:700;color:#1b4596;word-spacing:-1.3px;transform:scale(1.0068,1.0);transform-origin:0 9.10px;">On-board frequency response signals are computed by the DSP without relying on the PC.</div>
<div class="a" style="left:554px;top:725px;width:63px;height:21px;border:1px solid #8fa7c7;border-radius:3px;background:linear-gradient(#dfedfc,#d4e6fb 40%,#bfd9fa 41%,#bad6fa 80%,#c6defa)"></div>
<div class="a" style="left:624px;top:725px;width:64px;height:21px;border:1px solid #8fa7c7;border-radius:3px;background:linear-gradient(#dfedfc,#d4e6fb 40%,#bfd9fa 41%,#bad6fa 80%,#c6defa)"></div>
<div class="t" style="left:580.80px;top:732.03px;font-size:10.0px;line-height:11px;font-weight:400;color:#2a3f8c;word-spacing:0px;transform:scale(0.8255,1.0);transform-origin:0 8.96px;"><u style="text-decoration-thickness:0.8px;text-underline-offset:1px">O</u>K</div>
<div class="t" style="left:643.00px;top:732.03px;font-size:10.0px;line-height:11px;font-weight:400;color:#2a3f8c;word-spacing:0px;transform:scale(0.9124,1.0);transform-origin:0 8.96px;"><u style="text-decoration-thickness:0.8px;text-underline-offset:1px">C</u>ancel</div>
</body></html>
